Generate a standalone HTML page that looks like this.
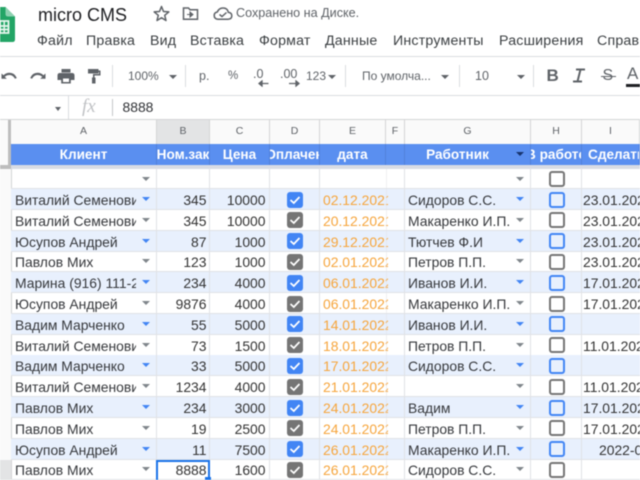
<!DOCTYPE html>
<html><head><meta charset="utf-8">
<style>
html,body{margin:0;padding:0;background:#fff;overflow:hidden}
#p{position:relative;width:640px;height:480px;overflow:hidden;background:#fff;font-family:"Liberation Sans",sans-serif;color:#333;filter:blur(.4px)}
#p div{position:absolute;white-space:nowrap}
.m{top:32px;font-size:14.2px;letter-spacing:.2px;color:#3c4043;line-height:18px}
.t{top:68px;font-size:12px;color:#5f6368;line-height:16px}
.v{top:65px;width:1px;height:22px;background:#dadce0}
.tri{width:0;height:0;border-left:4px solid transparent;border-right:4px solid transparent;border-top:4px solid #5f6368}
.cl{top:120px;height:24px;line-height:23px;font-size:10.5px;text-align:center;color:#5f6368;background:#fafafa;border-right:1px solid #d4d5d6;box-sizing:border-box}
.h{top:144px;height:21px;background:#5a8ff0;color:#fff;font-weight:bold;font-size:13.6px;line-height:21px;display:flex;justify-content:center;overflow:hidden;border-right:1px solid #5282da;box-sizing:border-box}
.r{left:11px;width:629px;height:21px;border-bottom:1px solid #e0e2e6;box-sizing:border-box}
.b{background:#e8f0fd}
.r div{top:0;height:20.5px;line-height:22px;font-size:13.9px;overflow:hidden}
.r .a1{left:4px;width:121px;color:#36383c}
.r .a2{left:146.5px;width:49px;text-align:right}
.r .a3{left:198.5px;width:56px;text-align:right}
.r .a5{left:312px;width:65px;color:#f6a53c}
.r .a7{left:397px;width:105px;color:#36383c}
.r .a9{left:572px;width:60px}
.r .ar{width:0;height:0;left:131px;top:8px;border-left:4px solid transparent;border-right:4px solid transparent;border-top:4px solid #80868b;overflow:visible}
.r .ar2{left:505px}
.b .ar{border-top-color:#4285f4}
.r .cb{left:275.5px;top:2.5px;width:16px;height:16px;border-radius:3px;box-sizing:border-box;background:#757575;overflow:visible}
.b .cb{background:#4285f4}
.cb svg{display:block}
.r .ob{left:537.5px;top:2.5px;width:16px;height:16px;border-radius:3px;box-sizing:border-box;border:2px solid #757575;background:#fff}
.r.b .ob{border-color:#4285f4;background:#e8f0fd}
.vl{top:168px;width:1px;height:312px;background:#e0e2e6}
</style></head><body>
<div id="p">

<!-- logo -->
<svg style="position:absolute;left:0;top:7px" width="16" height="36" viewBox="0 0 16 36"><path d="M-8 0H5.500L15 9.500V32.500Q15 35 12.500 35H-8Z" fill="#23a566"/><path d="M5.500 0L15 9.500H8Q5.500 9.500 5.500 7Z" fill="#8ed1b1"/><path d="M0 14H8.500V26H0ZM0 19H8.500M0 22.500H8.500" fill="none" stroke="#e7f6ee" stroke-width="1.800"/><path d="M4.200 14V26" stroke="#e7f6ee" stroke-width="1.500"/></svg>

<!-- title -->
<div style="left:38px;top:4px;font-size:18px;line-height:22px;color:#202124">micro CMS</div>
<svg style="position:absolute;left:152.500px;top:5px" width="17" height="17" viewBox="0 0 17 17"><path d="M8.500 1.500L10.500 6.500L15.800 6.900L11.700 10.300L13 15.500L8.500 12.700L4 15.500L5.300 10.300L1.200 6.900L6.500 6.500Z" fill="none" stroke="#5f6368" stroke-width="1.500" stroke-linejoin="round"/></svg>
<svg style="position:absolute;left:182px;top:6px" width="17" height="15" viewBox="0 0 17 15"><path d="M1.500 2H6.500L8 3.700H15.500V13.300H1.500Z" fill="none" stroke="#5f6368" stroke-width="1.500"/><path d="M5 8.500H10M8 6L11 8.500L8 11Z" fill="#5f6368" stroke="#5f6368"/></svg>
<svg style="position:absolute;left:212.500px;top:6px" width="20" height="15" viewBox="0 0 20 15"><path d="M5 13.200Q1.200 13 1.200 9.500Q1.200 6.500 4.300 6Q6 2 10 2Q14.500 2 15.300 6.300Q18.800 6.800 18.800 9.800Q18.800 13.200 15 13.200Z" fill="none" stroke="#5f6368" stroke-width="1.500"/><path d="M6.500 8.500L9 10.500L13.500 6.500" fill="none" stroke="#5f6368" stroke-width="1.500"/></svg>
<div style="left:236px;top:5px;font-size:12.600px;line-height:16px;color:#5f6368">Сохранено на Диске.</div>

<!-- menu -->
<div class="m" style="left:37px">Файл</div>
<div class="m" style="left:86px">Правка</div>
<div class="m" style="left:150px">Вид</div>
<div class="m" style="left:190px">Вставка</div>
<div class="m" style="left:259px">Формат</div>
<div class="m" style="left:325px">Данные</div>
<div class="m" style="left:393px">Инструменты</div>
<div class="m" style="left:499px">Расширения</div>
<div class="m" style="left:597px">Справка</div>

<div style="left:0;top:56px;width:640px;height:1px;background:#dadce0"></div>

<!-- toolbar -->
<svg style="position:absolute;left:0;top:69px" width="18" height="14" viewBox="0 0 18 14"><path d="M1.500 4.500V9.800H6.800L4.700 7.700Q7 6 9.500 6Q13 6 15 9.800L16.800 9Q14.500 3.800 9.500 3.800Q6 3.800 3.500 6.300Z" fill="#5f6368"/></svg>
<svg style="position:absolute;left:29px;top:69px" width="18" height="14" viewBox="0 0 18 14"><path d="M16.500 4.500V9.800H11.200L13.300 7.700Q11 6 8.500 6Q5 6 3 9.800L1.200 9Q3.500 3.800 8.500 3.800Q12 3.800 14.500 6.300Z" fill="#5f6368"/></svg>
<svg style="position:absolute;left:57px;top:68px" width="18" height="16" viewBox="0 0 18 16"><path d="M4.500 1H13.500V4.500H4.500ZM3 5H15Q17.500 5 17.500 7.500V12H13.800V15.500H4.200V12H.5V7.500Q.5 5 3 5Z" fill="#5f6368"/><path d="M6 10.500H12V14H6Z" fill="#fff"/></svg>
<svg style="position:absolute;left:87px;top:68px" width="15" height="16" viewBox="0 0 15 16"><path d="M1 1H11.500V2.500H13.500V7.500H7.500V9.500H8.500V15.500H5V9.500H6V6H12V4H11.500V5.500H1Z" fill="#5f6368"/></svg>
<div class="v" style="left:112px"></div>
<div class="t" style="left:128px">100%</div><div class="tri" style="left:169px;top:75px"></div>
<div class="v" style="left:185px"></div>
<div class="t" style="left:199px;font-size:12.500px">р.</div>
<div class="t" style="left:228px;font-size:11.500px">%</div>
<div class="t" style="left:253px;top:66px;font-size:12.500px">.0</div>
<svg style="position:absolute;left:258px;top:80px" width="11" height="7"><path d="M1 3.500H10.500M1 3.500L4 1V6Z" stroke="#5f6368" stroke-width="1.300" fill="#5f6368"/></svg>
<div class="t" style="left:280px;top:66px;font-size:12.500px">.00</div>
<svg style="position:absolute;left:289px;top:80px" width="11" height="7"><path d="M0 3.500H10M10 3.500L7 1V6Z" stroke="#5f6368" stroke-width="1.300" fill="#5f6368"/></svg>
<div class="t" style="left:306px">123</div><div class="tri" style="left:328px;top:75px"></div>
<div class="v" style="left:345px"></div>
<div class="t" style="left:362px">По умолча...</div><div class="tri" style="left:441px;top:75px"></div>
<div class="v" style="left:459px"></div>
<div class="t" style="left:475px;font-size:12.500px">10</div><div class="tri" style="left:517px;top:75px"></div>
<div class="v" style="left:533px"></div>
<div style="left:546.500px;top:67px;font-size:17px;line-height:18px;font-weight:bold;color:#5f6368">B</div>
<svg style="position:absolute;left:572px;top:68px" width="14" height="15" viewBox="0 0 14 15"><path d="M4 1.500H13M1 13.500H10M8.500 1.500L5.500 13.500" stroke="#5f6368" stroke-width="2" fill="none"/></svg>
<div style="left:602.500px;top:67px;font-size:16px;line-height:18px;color:#5f6368">S</div>
<div style="left:600.500px;top:75.500px;width:15px;height:1.500px;background:#5f6368"></div>
<div style="left:627px;top:65px;font-size:17px;line-height:18px;color:#5f6368">A</div>
<div style="left:626px;top:84px;width:14px;height:3px;background:#202124"></div>

<div style="left:0;top:95px;width:640px;height:1px;background:#dadce0"></div>

<!-- formula bar -->
<div class="tri" style="left:55px;top:106.500px;border-left-width:3px;border-right-width:3px"></div>
<div style="left:68px;top:96px;width:1px;height:23px;background:#dadce0"></div>
<div style="left:82px;top:96px;font-family:'Liberation Serif',serif;font-style:italic;font-size:19px;line-height:22px;color:#c0c2c5">fx</div>
<div style="left:112px;top:99px;width:1px;height:17px;background:#c4c6c9"></div>
<div style="left:122.500px;top:98px;font-size:13.900px;line-height:18px;color:#303236">8888</div>
<div style="left:0;top:118.500px;width:640px;height:1.500px;background:#d4d5d6"></div>

<!-- column letters -->
<div style="left:0;top:120px;width:8px;height:46px;background:#fafafa"></div>
<div style="left:8px;top:120px;width:3px;height:46px;background:#bdbdbd"></div>
<div class="cl" style="left:11px;width:146px">A</div>
<div class="cl" style="left:157px;width:53px;background:#e3e4e5">B</div>
<div class="cl" style="left:210px;width:60px">C</div>
<div class="cl" style="left:270px;width:50px">D</div>
<div class="cl" style="left:320px;width:66px">E</div>
<div class="cl" style="left:386px;width:19px">F</div>
<div class="cl" style="left:405px;width:126px">G</div>
<div class="cl" style="left:531px;width:51px">H</div>
<div class="cl" style="left:582px;width:58px">I</div>

<!-- header row -->
<div class="h" style="left:11px;width:146px">Клиент</div>
<div class="h" style="left:157px;width:53px">Ном.зак</div>
<div class="h" style="left:210px;width:60px">Цена</div>
<div class="h" style="left:270px;width:50px">Оплачен</div>
<div class="h" style="left:320px;width:66px">дата</div>
<div class="h" style="left:386px;width:19px"></div>
<div class="h" style="left:405px;width:126px;padding-right:20px">Работник</div>
<div class="tri" style="left:516px;top:152px;border-top-color:#17346e"></div>
<div class="h" style="left:531px;width:51px">В работе</div>
<div class="h" style="left:582px;width:58px;justify-content:flex-start;padding-left:6px">Сделать</div>

<!-- frozen band + left gutter -->
<div style="left:0;top:165px;width:11px;height:3.500px;background:#bdbdbd"></div>
<div style="left:11px;top:165px;width:629px;height:3.500px;background:#d9dce4"></div>
<div style="left:0;top:168.500px;width:11px;height:312px;background:#fafafa;border-right:1px solid #d4d5d6"></div>
<div style="left:0;top:459.500px;width:11px;height:21px;background:#e3e4e5"></div>

<!-- filter row -->
<div class="r" style="top:168.500px;height:20.500px"><div class="ar"></div><div class="ar ar2"></div><div class="ob"></div></div>

<!-- data rows -->
<div class="r b" style="top:189px"><div class="a1">Виталий Семенович</div><div class="ar"></div><div class="a2">345</div><div class="a3">10000</div><div class="cb"><svg width="16" height="16"><path d="M3.500 8L6.800 11L12.500 5" fill="none" stroke="#fff" stroke-width="1.700"/></svg></div><div class="a5">02.12.2021</div><div class="a7">Сидоров С.С.</div><div class="ar ar2"></div><div class="ob"></div><div class="a9">23.01.2022</div></div>
<div class="r" style="top:209.800px"><div class="a1">Виталий Семенович</div><div class="ar"></div><div class="a2">345</div><div class="a3">10000</div><div class="cb"><svg width="16" height="16"><path d="M3.500 8L6.800 11L12.500 5" fill="none" stroke="#fff" stroke-width="1.700"/></svg></div><div class="a5">20.12.2021</div><div class="a7">Макаренко И.П.</div><div class="ar ar2"></div><div class="ob"></div><div class="a9">23.01.2022</div></div>
<div class="r b" style="top:230.600px"><div class="a1">Юсупов Андрей</div><div class="ar"></div><div class="a2">87</div><div class="a3">1000</div><div class="cb"><svg width="16" height="16"><path d="M3.500 8L6.800 11L12.500 5" fill="none" stroke="#fff" stroke-width="1.700"/></svg></div><div class="a5">29.12.2021</div><div class="a7">Тютчев Ф.И</div><div class="ar ar2"></div><div class="ob"></div><div class="a9">23.01.2022</div></div>
<div class="r" style="top:251.400px"><div class="a1">Павлов Мих</div><div class="ar"></div><div class="a2">123</div><div class="a3">1000</div><div class="cb"><svg width="16" height="16"><path d="M3.500 8L6.800 11L12.500 5" fill="none" stroke="#fff" stroke-width="1.700"/></svg></div><div class="a5">02.01.2022</div><div class="a7">Петров П.П.</div><div class="ar ar2"></div><div class="ob"></div><div class="a9">23.01.2022</div></div>
<div class="r b" style="top:272.200px"><div class="a1">Марина (916) 111-22-33</div><div class="ar"></div><div class="a2">234</div><div class="a3">4000</div><div class="cb"><svg width="16" height="16"><path d="M3.500 8L6.800 11L12.500 5" fill="none" stroke="#fff" stroke-width="1.700"/></svg></div><div class="a5">06.01.2022</div><div class="a7">Иванов И.И.</div><div class="ar ar2"></div><div class="ob"></div><div class="a9">17.01.2022</div></div>
<div class="r" style="top:293px"><div class="a1">Юсупов Андрей</div><div class="ar"></div><div class="a2">9876</div><div class="a3">4000</div><div class="cb"><svg width="16" height="16"><path d="M3.500 8L6.800 11L12.500 5" fill="none" stroke="#fff" stroke-width="1.700"/></svg></div><div class="a5">06.01.2022</div><div class="a7">Макаренко И.П.</div><div class="ar ar2"></div><div class="ob"></div><div class="a9">17.01.2022</div></div>
<div class="r b" style="top:313.800px"><div class="a1">Вадим Марченко</div><div class="ar"></div><div class="a2">55</div><div class="a3">5000</div><div class="cb"><svg width="16" height="16"><path d="M3.500 8L6.800 11L12.500 5" fill="none" stroke="#fff" stroke-width="1.700"/></svg></div><div class="a5">14.01.2022</div><div class="a7">Иванов И.И.</div><div class="ar ar2"></div><div class="ob"></div></div>
<div class="r" style="top:334.600px"><div class="a1">Виталий Семенович</div><div class="ar"></div><div class="a2">73</div><div class="a3">1500</div><div class="cb"><svg width="16" height="16"><path d="M3.500 8L6.800 11L12.500 5" fill="none" stroke="#fff" stroke-width="1.700"/></svg></div><div class="a5">18.01.2022</div><div class="a7">Петров П.П.</div><div class="ar ar2"></div><div class="ob"></div><div class="a9">11.01.2022</div></div>
<div class="r b" style="top:355.400px"><div class="a1">Вадим Марченко</div><div class="ar"></div><div class="a2">33</div><div class="a3">5000</div><div class="cb"><svg width="16" height="16"><path d="M3.500 8L6.800 11L12.500 5" fill="none" stroke="#fff" stroke-width="1.700"/></svg></div><div class="a5">17.01.2022</div><div class="a7">Сидоров С.С.</div><div class="ar ar2"></div><div class="ob"></div></div>
<div class="r" style="top:376.200px"><div class="a1">Виталий Семенович</div><div class="ar"></div><div class="a2">1234</div><div class="a3">4000</div><div class="cb"><svg width="16" height="16"><path d="M3.500 8L6.800 11L12.500 5" fill="none" stroke="#fff" stroke-width="1.700"/></svg></div><div class="a5">21.01.2022</div><div class="ar ar2"></div><div class="ob"></div><div class="a9">11.01.2022</div></div>
<div class="r b" style="top:397px"><div class="a1">Павлов Мих</div><div class="ar"></div><div class="a2">234</div><div class="a3">3000</div><div class="cb"><svg width="16" height="16"><path d="M3.500 8L6.800 11L12.500 5" fill="none" stroke="#fff" stroke-width="1.700"/></svg></div><div class="a5">24.01.2022</div><div class="a7">Вадим</div><div class="ar ar2"></div><div class="ob"></div><div class="a9">17.01.2022</div></div>
<div class="r" style="top:417.800px"><div class="a1">Павлов Мих</div><div class="ar"></div><div class="a2">19</div><div class="a3">2500</div><div class="cb"><svg width="16" height="16"><path d="M3.500 8L6.800 11L12.500 5" fill="none" stroke="#fff" stroke-width="1.700"/></svg></div><div class="a5">24.01.2022</div><div class="a7">Петров П.П.</div><div class="ar ar2"></div><div class="ob"></div><div class="a9">17.01.2022</div></div>
<div class="r b" style="top:438.600px"><div class="a1">Юсупов Андрей</div><div class="ar"></div><div class="a2">11</div><div class="a3">7500</div><div class="cb"><svg width="16" height="16"><path d="M3.500 8L6.800 11L12.500 5" fill="none" stroke="#fff" stroke-width="1.700"/></svg></div><div class="a5">26.01.2022</div><div class="a7">Макаренко И.П.</div><div class="ar ar2"></div><div class="ob"></div><div class="a9" style="left:588px">2022-01-17</div></div>
<div class="r" style="top:459.400px"><div class="a1">Павлов Мих</div><div class="ar"></div><div class="a2">8888</div><div class="a3">1600</div><div class="cb"><svg width="16" height="16"><path d="M3.500 8L6.800 11L12.500 5" fill="none" stroke="#fff" stroke-width="1.700"/></svg></div><div class="a5">26.01.2022</div><div class="a7">Сидоров С.С.</div><div class="ar ar2"></div><div class="ob"></div></div>

<!-- vertical grid lines -->
<div class="vl" style="left:156px"></div>
<div class="vl" style="left:209px"></div>
<div class="vl" style="left:269px"></div>
<div class="vl" style="left:319px"></div>
<div class="vl" style="left:385.500px;opacity:.5"></div>
<div class="vl" style="left:404px"></div>
<div class="vl" style="left:530px"></div>
<div class="vl" style="left:581px"></div>

<!-- active cell -->
<div style="left:156px;top:459.500px;width:54px;height:22px;box-sizing:border-box;border:2px solid #1a73e8"></div>
<div style="left:205px;top:477px;width:6px;height:6px;background:#1a73e8"></div>
</div>
</body></html>
